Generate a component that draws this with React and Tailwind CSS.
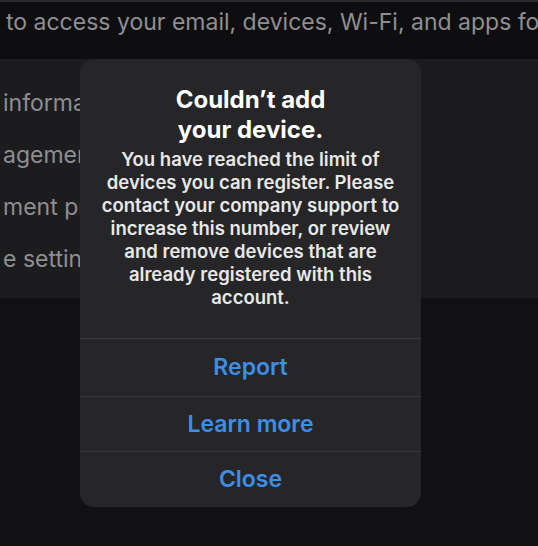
import { useState } from 'react'

const rows = ['information', 'agement', 'ment process', 'e settings']

const body = [
  'You have reached the limit of',
  'devices you can register. Please',
  'contact your company support to',
  'increase this number, or review',
  'and remove devices that are',
  'already registered with this',
  'account.',
]

const actions = ['Report', 'Learn more', 'Close']

export default function App() {
  const [open, setOpen] = useState(true)

  return (
    <div className="relative w-[538px] h-[546px] overflow-hidden bg-[#111113] font-['Inter','Noto_Sans',sans-serif]">
      <div className="h-[59px] bg-[#0e0e10] border-t-2 border-[#2a2a2c] flex items-center px-[6px] overflow-hidden">
        <p className="text-[23px] text-[#8f8f93] whitespace-nowrap -mt-[16px]">
          to access your email, devices, Wi-Fi, and apps for work
        </p>
      </div>

      <div className="h-[239px] bg-[#1c1c1e] pt-[18px] flex flex-col overflow-hidden">
        {rows.map(r => (
          <div key={r} className="h-[52px] flex items-center px-[3px]">
            <span className="text-[23px] text-[#8f8f93] whitespace-nowrap">{r}</span>
          </div>
        ))}
      </div>

      {open && (
        <div className="absolute left-[80px] top-[59px] w-[341px] h-[448px] rounded-[14px] bg-[#262628] flex flex-col overflow-hidden">
          <div className="pt-[26px] pb-[29px] px-[8px] text-center">
            <h2 className="text-[24px] leading-[30px] font-bold text-white">
              Couldn’t add
              <br />
              your device.
            </h2>
            <p className="mt-[3px] text-[18.5px] leading-[23px] font-semibold text-[#e8e8e8] whitespace-nowrap">
              {body.map((l, i) => (
                <span key={i} className="block">{l}</span>
              ))}
            </p>
          </div>
          <div className="flex-1 flex flex-col">
            {actions.map((a, i) => (
              <button
                key={a}
                onClick={() => a === 'Close' && setOpen(false)}
                className={`${i === 0 ? 'h-[58px]' : i === 1 ? 'h-[55px]' : 'flex-1'} border-t border-[#3a3a3c] text-[23px] font-semibold text-[#3e8ee6]`}
              >
                {a}
              </button>
            ))}
          </div>
        </div>
      )}
    </div>
  )
}
